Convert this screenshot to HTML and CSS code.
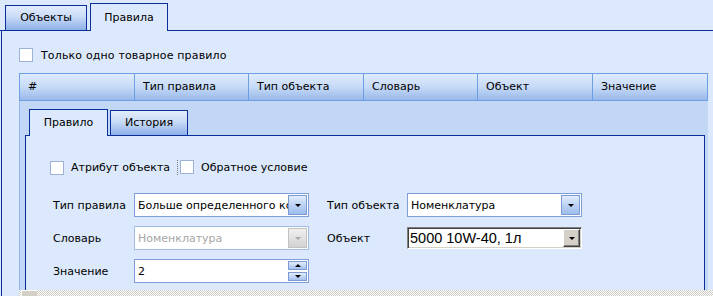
FILE: index.html
```html
<!DOCTYPE html>
<html lang="ru">
<head>
  <meta charset="UTF-8" />
  <title>Правила</title>
  <link rel="stylesheet" href="styles.css">
</head>
<body>
  <div class="tabbar">
    <div class="tab tab-objects">Объекты</div>
    <div class="tab tab-rules active">Правила</div>
  </div>

  <div class="page">
    <label class="check only-one"><span class="box"></span>Только одно товарное правило</label>

    <div class="grid">
      <div class="grid-head">
        <div class="col">#</div>
        <div class="col">Тип правила</div>
        <div class="col">Тип объекта</div>
        <div class="col">Словарь</div>
        <div class="col">Объект</div>
        <div class="col">Значение</div>
      </div>

      <div class="detail">
        <div class="tabbar inner">
          <div class="tab tab-rule active">Правило</div>
          <div class="tab tab-history">История</div>
        </div>

        <div class="inner-panel">
          <div class="checks">
            <label class="check focused"><span class="box"></span>Атрибут объекта</label>
            <label class="check"><span class="box"></span>Обратное условие</label>
          </div>

          <div class="form">
            <div class="lbl">Тип правила</div>
            <div class="combo">
              <span class="val">Больше определенного количества</span>
              <span class="drop"><i class="arrow"></i></span>
            </div>
            <div class="lbl lbl2">Тип объекта</div>
            <div class="combo">
              <span class="val">Номенклатура</span>
              <span class="drop"><i class="arrow"></i></span>
            </div>

            <div class="lbl">Словарь</div>
            <div class="combo disabled">
              <span class="val">Номенклатура</span>
              <span class="drop"><i class="arrow"></i></span>
            </div>
            <div class="lbl lbl2">Объект</div>
            <div class="combo classic">
              <span class="val">5000 10W-40, 1л</span>
              <span class="drop"><i class="arrow"></i></span>
            </div>

            <div class="lbl">Значение</div>
            <div class="combo spin">
              <span class="val">2</span>
              <span class="spin-btns">
                <span class="sbtn"><i class="arrow up"></i></span>
                <span class="sbtn"><i class="arrow"></i></span>
              </span>
            </div>
          </div>
        </div>
      </div>

      <div class="hscroll"><span class="hbtn"></span></div>
    </div>
  </div>
</body>
</html>
```

FILE: styles.css
```css
body {
  margin: 0;
  width: 713px;
  height: 296px;
  overflow: hidden;
  background-color: #dce9fc;
  font-family: 'DejaVu Sans', sans-serif;
  font-size: 11px;
  color: #000;
}

/* tabs */
.tabbar {
  display: flex;
  align-items: flex-end;
  height: 30px;
  padding-left: 5px;
  gap: 3px;
  border-bottom: 1px solid #0b2f9a;
}

.tab {
  box-sizing: border-box;
  height: 25px;
  line-height: 24px;
  text-align: center;
  border: 1px solid #0b2f9a;
  border-bottom: none;
  background: linear-gradient(#e3edfc, #c9dbf6 45%, #8db0e8);
}

.tab.active {
  height: 28px;
  padding-top: 2px;
  margin-bottom: -1px;
  background: #dce9fc;
}

.tab-objects { width: 82px; }
.tab-rules { width: 78px; }

/* outer page */
.page {
  margin-left: 1px;
  border-left: 1px solid #0b2f9a;
  padding: 17px 0 0 17px;
}

.check {
  display: flex;
  align-items: center;
  height: 14px;
  white-space: nowrap;
}

.box {
  box-sizing: border-box;
  width: 14px;
  height: 14px;
  margin-right: 8px;
  background: #fff;
  border: 1px solid #9db2d8;
}

.only-one {
  margin-bottom: 11px;
  letter-spacing: 0.15px;
}

/* grid */
.grid {
  width: 689px;
}

.grid-head {
  display: grid;
  grid-template-columns: 115px 114px 115px 114px 115px 115px;
  height: 28px;
  box-sizing: border-box;
  border: 1px solid #6e9fe4;
  border-right: none;
  background: linear-gradient(#dfebfd, #c6daf7 50%, #98b8ea);
}

.col {
  line-height: 26px;
  padding-left: 8px;
  border-right: 1px solid #6e9fe4;
}

.detail {
  display: flex;
  flex-direction: column;
  height: 189px;
  box-sizing: border-box;
  padding: 8px 3px 0 5px;
  border-left: 1px solid #93b6ec;
  background-color: #c2d7f6;
}

.tabbar.inner {
  height: 26px;
  gap: 2px;
  padding-left: 4px;
  background-color: #c2d7f6;
}

.inner .tab.active {
  height: 27px;
  padding-top: 0;
  line-height: 26px;
}

.tab-rule { width: 79px; }
.tab-history { width: 78px; }

.inner-panel {
  flex: 1;
  border-left: 1px solid #0b2f9a;
  border-right: 1px solid #0b2f9a;
  background-color: #dce9fc;
  padding: 24px 0 0 24px;
}

.checks {
  display: flex;
  gap: 2px;
}

.checks .box {
  margin-right: 7px;
}

.check.focused {
  box-sizing: border-box;
  width: 128px;
  height: 15px;
  border-right: 1px dotted #777;
}

/* form */
.form {
  display: grid;
  grid-template-columns: 81px 175px 98px 175px;
  grid-auto-rows: 24px;
  row-gap: 9px;
  align-items: center;
  margin: 18px 0 0 3px;
}

.lbl2 {
  padding-left: 18px;
}

.combo {
  display: flex;
  align-items: center;
  height: 24px;
  box-sizing: border-box;
  border: 1px solid #7f9dd9;
  background: #fff;
  overflow: hidden;
}

.val {
  flex: 1;
  min-width: 0;
  overflow: hidden;
  white-space: nowrap;
  padding-left: 3px;
}

.drop {
  flex: none;
  box-sizing: border-box;
  width: 19px;
  height: 20px;
  margin-right: 1px;
  display: flex;
  align-items: center;
  justify-content: center;
  border: 1px solid #7b9bd6;
  background: linear-gradient(#e2ecfc, #b9d0f3 55%, #9ebdec);
}

.arrow {
  width: 0;
  height: 0;
  border-left: 3px solid transparent;
  border-right: 3px solid transparent;
  border-top: 3px solid #000;
}

.arrow.up {
  border-top: none;
  border-bottom: 3px solid #000;
}

.combo.disabled {
  border-color: #a2bbe6;
}

.combo.disabled .val {
  color: #a6a6a6;
}

.combo.disabled .drop {
  border-color: #c2c2c2;
  background: linear-gradient(#f0f0f0, #d2d2d2);
}

.combo.disabled .arrow {
  border-top-color: #a8a8a8;
}

.combo.classic {
  height: 22px;
  border-color: #808080 #fff #fff #808080;
  box-shadow: inset 1px 1px 0 #404040, inset -1px -1px 0 #d4d0c8;
}

.combo.classic .val {
  font-family: 'Liberation Sans', Arial, sans-serif;
  font-size: 14.5px;
  color: #000;
  padding-left: 2px;
}

.combo.classic .drop {
  width: 17px;
  height: 18px;
  margin-right: 1px;
  border: 1px solid;
  border-color: #fff #404040 #404040 #fff;
  box-shadow: inset -1px -1px 0 #808080;
  background: #d4d0c8;
}

.spin-btns {
  display: flex;
  flex-direction: column;
  gap: 2px;
  margin-right: 1px;
}

.sbtn {
  box-sizing: border-box;
  width: 19px;
  height: 9px;
  display: flex;
  align-items: center;
  justify-content: center;
  border: 1px solid #7b9bd6;
  background: linear-gradient(#e2ecfc, #a5c2ee);
}

/* horizontal scrollbar */
.hscroll {
  display: flex;
  height: 7px;
  margin-right: -10px;
  padding-left: 2px;
  background: repeating-conic-gradient(#cfcbc3 0 25%, #fff 0 50%) 0 0 / 2px 2px;
}

.hbtn {
  box-sizing: border-box;
  width: 16px;
  height: 7px;
  border-top: 1px solid #fff;
  border-left: 1px solid #fff;
  background: #d4d0c8;
}
```
